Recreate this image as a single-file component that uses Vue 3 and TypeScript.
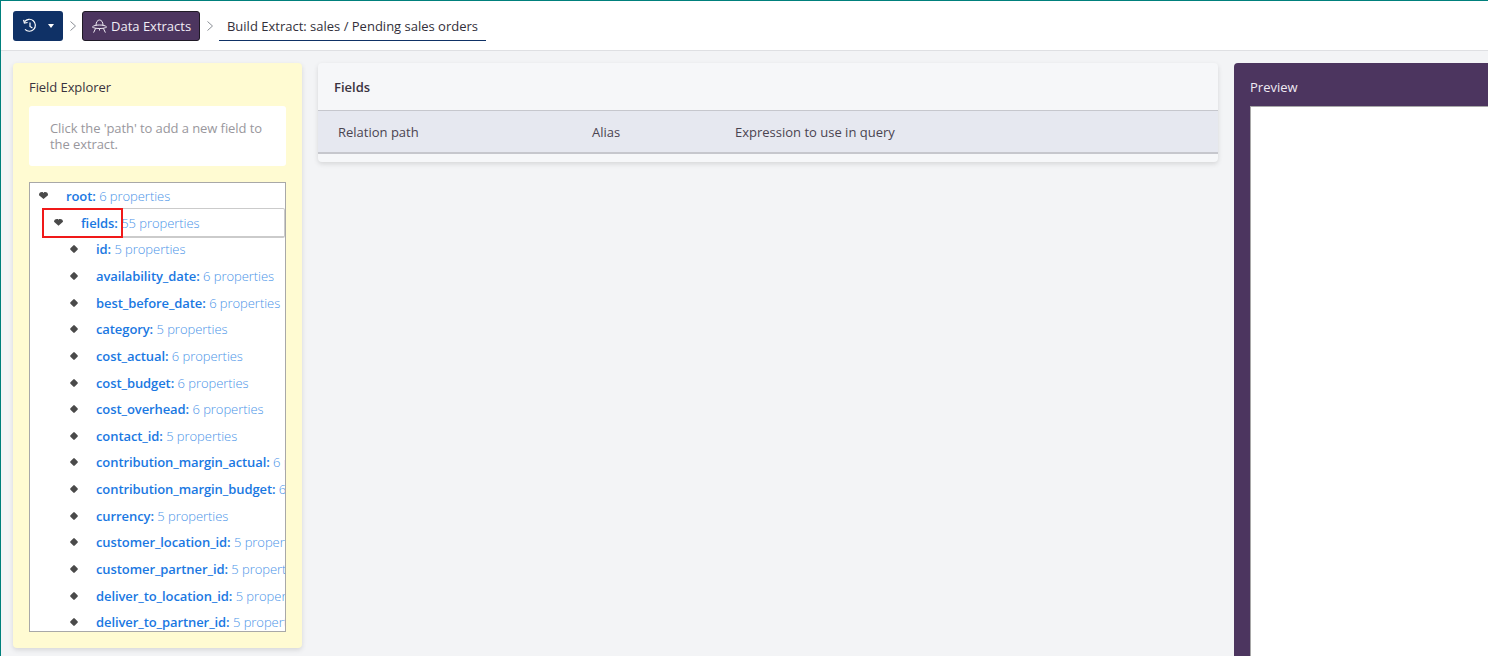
<script setup lang="ts">
interface Row { name: string; count: number }
const rows: Row[] = [
  { name: 'id', count: 5 },
  { name: 'availability_date', count: 6 },
  { name: 'best_before_date', count: 6 },
  { name: 'category', count: 5 },
  { name: 'cost_actual', count: 6 },
  { name: 'cost_budget', count: 6 },
  { name: 'cost_overhead', count: 6 },
  { name: 'contact_id', count: 5 },
  { name: 'contribution_margin_actual', count: 6 },
  { name: 'contribution_margin_budget', count: 6 },
  { name: 'currency', count: 5 },
  { name: 'customer_location_id', count: 5 },
  { name: 'customer_partner_id', count: 5 },
  { name: 'deliver_to_location_id', count: 5 },
  { name: 'deliver_to_partner_id', count: 5 },
]
</script>

<template>
  <div class="page">
    <header class="topbar">
      <button class="history">
        <svg width="16" height="16" viewBox="0 0 16 16" fill="none" stroke="#fff" stroke-width="1.2">
          <path d="M2.6 3.6A6 6 0 1 1 3 11.4" />
          <path d="M1.6 1.8 2.4 5l3.2-.5" />
          <path d="M8 4.6V8.4l2.4 1.6" />
        </svg>
        <span class="caret"></span>
      </button>
      <svg class="chev" width="8" height="12" viewBox="0 0 8 12" fill="none" stroke="#8b8f96" stroke-width="1">
        <path d="M1.5 1.5 6.5 6l-5 4.5" />
      </svg>
      <button class="crumb">
        <svg width="17" height="16" viewBox="0 0 17 16" fill="none" stroke="#f1edf5" stroke-width="1">
          <path d="M5 7.5C5 4 6.5 2 8.5 2S12 4 12 7.5" />
          <path d="M1.4 9C2.5 7.6 5 7 8.5 7s6 .6 7.1 2c-1.1 1-3.6 1.5-7.1 1.5S2.5 10 1.4 9Z" />
          <path d="M4.6 10.4 2.6 14.6M12.4 10.4l2 4.2M8.5 10.5v2" />
        </svg>
        <span>Data Extracts</span>
      </button>
      <svg class="chev" width="8" height="12" viewBox="0 0 8 12" fill="none" stroke="#8b8f96" stroke-width="1">
        <path d="M1.5 1.5 6.5 6l-5 4.5" />
      </svg>
      <div class="title">Build Extract: sales / Pending sales orders</div>
    </header>

    <main class="content">
      <section class="explorer">
        <h2 class="explorer-title">Field Explorer</h2>
        <p class="hint">Click the 'path' to add a new field to the extract.</p>
        <div class="tree">
          <div class="row root">
            <span class="marker open"></span>
            <b>root:</b> <span class="count">6 properties</span>
          </div>
          <div class="row fields">
            <span class="marker open"></span>
            <b>fields:</b> <span class="count">55 properties</span>
            <span class="highlight"></span>
          </div>
          <div v-for="row in rows" :key="row.name" class="row leaf">
            <span class="marker"></span>
            <b>{{ row.name }}:</b> <span class="count">{{ row.count }} properties</span>
          </div>
        </div>
      </section>

      <section class="fields-card">
        <h2 class="fields-title">Fields</h2>
        <div class="table-head">
          <span class="col-path">Relation path</span>
          <span class="col-alias">Alias</span>
          <span>Expression to use in query</span>
        </div>
        <div class="table-foot"></div>
      </section>

      <section class="preview">
        <h2 class="preview-title">Preview</h2>
        <div class="preview-body"></div>
      </section>
    </main>
  </div>
</template>

<style>
html, body { margin: 0; height: 100%; overflow: hidden; background: #f3f4f6; }
</style>

<style scoped>
.page {
  width: 1488px;
  height: 656px;
  box-sizing: border-box;
  overflow: hidden;
  background: #f3f4f6;
  border-top: 1px solid #00807c;
  border-left: 1px solid #00807c;
  font-family: "Open Sans", "Noto Sans", sans-serif;
  font-size: 13px;
  color: #3a3340;
}
.topbar {
  height: 50px;
  box-sizing: border-box;
  background: #fff;
  border-bottom: 1px solid #dfe0e3;
  display: flex;
  align-items: flex-start;
  padding: 10px 0 0 12px;
}
.history {
  width: 50px;
  height: 30px;
  border: 0;
  border-radius: 3px;
  background: #0f3166;
  display: flex;
  align-items: center;
  padding: 0 0 0 9px;
  margin: 0;
}
.caret {
  margin-left: 10px;
  border-left: 3.5px solid transparent;
  border-right: 3.5px solid transparent;
  border-top: 4px solid #fff;
}
.chev { margin: 9px 5px 0 6px; }
.crumb {
  width: 118px;
  height: 30px;
  box-sizing: border-box;
  border: 1px solid #1f1a26;
  border-radius: 3px;
  background: #4c355f;
  color: #f1edf5;
  display: flex;
  align-items: center;
  gap: 3px;
  padding: 0 0 0 8px;
  font: inherit;
  margin: 0;
}
.title {
  width: 267px;
  height: 30px;
  box-sizing: border-box;
  border-bottom: 1px solid #0f3166;
  text-align: center;
  line-height: 31px;
  color: #33303a;
  white-space: nowrap;
}
.content {
  display: grid;
  grid-template-columns: 289px 900px 300px;
  column-gap: 16px;
  align-items: start;
  padding: 12px 0 0 12px;
}
h2 { margin: 0; font: inherit; }
.explorer {
  height: 585px;
  box-sizing: border-box;
  background: #fffbd2;
  border-radius: 4px;
  box-shadow: 0 2px 5px rgba(0, 0, 0, 0.12);
  padding: 16px;
  display: flex;
  flex-direction: column;
}
.explorer-title { line-height: 16px; height: 27px; letter-spacing: -0.07px; }
.hint {
  margin: 0 0 16px;
  width: 257px;
  height: 60px;
  box-sizing: border-box;
  background: #fff;
  border-radius: 3px;
  padding: 14px 16px 0 21px;
  line-height: 16px;
  letter-spacing: -0.08px;
  color: #99979d;
}
.tree {
  width: 257px;
  height: 450px;
  box-sizing: border-box;
  border: 1px solid #a8a8a8;
  background: #fff;
  overflow: hidden;
}
.row {
  position: relative;
  height: 26.65px;
  box-sizing: border-box;
  line-height: 26px;
  white-space: nowrap;
  color: #1a78e2;
}
.row b { font-weight: 600; letter-spacing: -0.09px; }
.count { color: #4a94e8; font-weight: 300; letter-spacing: -0.05px; }
.root { padding-left: 36px; }
.fields {
  margin-left: 12px;
  padding-left: 38px;
  border: 2px solid #cbcbcb;
  border-width: 1px 1px 2px 1px;
  border-radius: 2px;
  height: 30px;
  line-height: 28px;
  margin-top: -2px;
  margin-bottom: -1.35px;
}
.leaf { padding-left: 66px; }
.marker {
  position: absolute;
  width: 6px;
  height: 6px;
  background: #4a4a4a;
  transform: rotate(45deg);
  border-radius: 1px;
}
.marker.open {
  width: 9px;
  height: 7px;
  transform: none;
  border-radius: 3px 3px 0 0;
  clip-path: polygon(0 0, 40% 0, 50% 15%, 60% 0, 100% 0, 100% 45%, 50% 100%, 0 45%);
}
.root .marker { left: 9px; top: 9px; }
.fields .marker { left: 11px; top: 10px; }
.leaf .marker { left: 40.5px; top: 10px; }
.highlight {
  position: absolute;
  left: -1px;
  top: -1px;
  width: 81px;
  height: 30px;
  box-sizing: border-box;
  border: 2px solid #f01919;
}
.fields-card {
  height: 99px;
  background: #f6f7f9;
  border-radius: 4px;
  box-shadow: 0 2px 5px rgba(0, 0, 0, 0.12);
}
.fields-title {
  height: 47px;
  box-sizing: border-box;
  padding: 15px 0 0 16px;
  line-height: 18px;
  font-weight: 600;
  color: #3a3340;
}
.table-head {
  height: 44px;
  box-sizing: border-box;
  background: #e6e8f0;
  border-top: 1px solid #c6c7cd;
  border-bottom: 2px solid #c6c7cd;
  display: flex;
  align-items: center;
  padding-left: 20px;
  color: #4a4450;
}
.col-path { width: 254px; }
.col-alias { width: 143px; }
.preview {
  height: 640px;
  box-sizing: border-box;
  background: #4c355f;
  border-radius: 4px 0 0 0;
  padding: 16px;
}
.preview-title { height: 27px; line-height: 16px; color: #efeaf3; }
.preview-body {
  height: 580px;
  background: #fff;
  border-top: 1px solid #a8a8a8;
  border-left: 1px solid #a8a8a8;
  box-sizing: border-box;
}
</style>
